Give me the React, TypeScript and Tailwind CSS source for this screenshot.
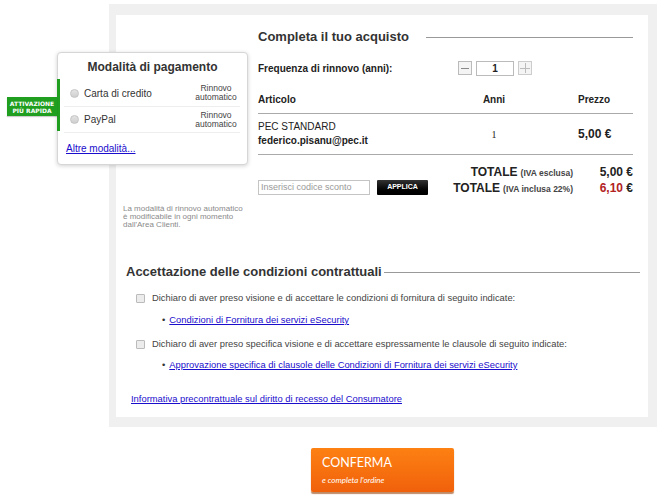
import React from "react";

const ff = "font-['Liberation_Sans',Arial,sans-serif]";

function PaymentCard() {
    return (
        <div className="absolute left-[57px] top-[52px] w-[191px] h-[113px] bg-white border border-[#d6d6d6] rounded-[4px] shadow-[0_1px_4px_rgba(0,0,0,0.18)]">
            <div className="text-center text-[12px] font-bold text-[#333] mt-[7px] leading-[15px]">Modalità di pagamento</div>
            {/* green accent */}
            <div className="absolute -left-px top-[26px] w-[3px] h-[52px] bg-[#1f9e1f]" />
            <div className="mt-[5px] ml-[6px] mr-[7px]">
                <div className="flex items-center h-[27px] border-b border-[#eeeeee]">
                    <span className="w-[9px] h-[9px] rounded-full bg-gradient-to-b from-[#e4e4e4] to-[#cfcfcf] border border-[#c4c4c4] ml-[6px]" />
                    <span className="ml-[5px] text-[10px] text-[#333]">Carta di credito</span>
                    <span className="ml-auto w-[48px] text-center text-[8.5px] leading-[9px] text-[#444]">Rinnovo<br />automatico</span>
                </div>
                <div className="flex items-center h-[26px] border-b border-[#eeeeee]">
                    <span className="w-[9px] h-[9px] rounded-full bg-gradient-to-b from-[#e4e4e4] to-[#cfcfcf] border border-[#c4c4c4] ml-[6px]" />
                    <span className="ml-[5px] text-[10px] text-[#333]">PayPal</span>
                    <span className="ml-auto w-[48px] text-center text-[8.5px] leading-[9px] text-[#444]">Rinnovo<br />automatico</span>
                </div>
                <a href="#" className="block mt-[8px] ml-[2px] text-[10px] text-[#1a0dcc] underline">Altre modalità...</a>
            </div>
        </div>
    );
}

function Badge() {
    return (
        <div className="absolute left-[7px] top-[97px] w-[50px] h-[19px] bg-[#1f9e1f] flex flex-col items-center justify-center text-white font-bold text-[6px] leading-[7px] font-['DejaVu_Sans',sans-serif] shadow-[0_1px_1px_rgba(0,0,0,0.2)]">
            <span>ATTIVAZIONE</span>
            <span>PIÙ RAPIDA</span>
        </div>
    );
}

function Checkout() {
    return (
        <div className="w-[375px] pt-[12px] text-[#222]">
            <div className="flex items-center h-[20px]">
                <h2 className="text-[13px] font-bold text-[#333]">Completa il tuo acquisto</h2>
                <div className="flex-1 ml-[17px] border-t border-[#999]" />
            </div>
            <div className="flex items-center mt-[13px] h-[16px]">
                <span className="w-[200px] text-[10px] font-bold">Frequenza di rinnovo (anni):</span>
                <div className="flex items-center gap-[4px]">
                    <span className="w-[14px] h-[14px] border border-[#bbb] bg-[#f4f4f4] flex items-center justify-center">
                        <span className="w-[8px] h-px bg-[#888]" />
                    </span>
                    <span className="w-[38px] h-[15px] border border-[#bbb] bg-white flex items-center justify-center text-[10px] font-bold">1</span>
                    <span className="w-[14px] h-[14px] border border-[#ccc] bg-[#f4f4f4] relative flex items-center justify-center">
                        <span className="absolute w-[10px] h-px bg-[#bbb]" />
                        <span className="absolute h-[10px] w-px bg-[#bbb]" />
                    </span>
                </div>
            </div>
            <div className="grid grid-cols-[200px_72px_103px] mt-[16px] text-[10px] font-bold pb-[6px] border-b border-[#aaa]">
                <span>Articolo</span>
                <span className="text-center">Anni</span>
                <span className="pl-[48px]">Prezzo</span>
            </div>
            <div className="grid grid-cols-[200px_72px_103px] items-center h-[41px] border-b border-[#aaa]">
                <div className="text-[10px] leading-[14px]">
                    <div>PEC STANDARD</div>
                    <div className="font-bold">federico.pisanu@pec.it</div>
                </div>
                <span className="text-center text-[10px] font-['Liberation_Serif',serif]">1</span>
                <span className="pl-[48px] text-[12px] font-bold">5,00 €</span>
            </div>
            <div className="flex mt-[9px]">
                <div className="flex items-center self-end gap-[7px] mb-[1px]">
                    <span className="w-[112px] h-[15px] border border-[#c4c4c4] text-[9px] text-[#999] pl-[2px] leading-[13px]">Inserisci codice sconto</span>
                    <span className="w-[51px] h-[15px] bg-gradient-to-b from-[#333] to-[#000] text-white text-[7px] font-bold flex items-center justify-center rounded-[1px]">APPLICA</span>
                </div>
                <div className="ml-auto flex flex-col">
                    <div className="flex items-baseline justify-end h-[16px] leading-[16px]">
                        <span className="text-[12px] font-bold">TOTALE</span>
                        <span className="text-[8.5px] font-bold text-[#444] ml-[3px]">(IVA esclusa)</span>
                        <span className="w-[60px] text-right text-[12px] font-bold">5,00 €</span>
                    </div>
                    <div className="flex items-baseline justify-end h-[16px] leading-[16px]">
                        <span className="text-[12px] font-bold">TOTALE</span>
                        <span className="text-[8.5px] font-bold text-[#444] ml-[3px]">(IVA inclusa 22%)</span>
                        <span className="w-[60px] text-right text-[12px] font-bold"><span className="text-[#b22222]">6,10</span> €</span>
                    </div>
                </div>
            </div>
        </div>
    );
}

function Conditions() {
    return (
        <div className="pl-[10px] pr-[8px] mt-[34px]">
            <div className="flex items-center h-[18px]">
                <h2 className="text-[13px] font-bold text-[#333]">Accettazione delle condizioni contrattuali</h2>
                <div className="flex-1 border-t border-[#999] ml-[2px]" />
            </div>
            <div className="text-[9.4px] text-[#444] pl-[10px]">
                <div className="flex items-center mt-[10px] h-[14px]">
                    <span className="w-[9px] h-[9px] border border-[#bbb] bg-[#ececec] rounded-[1px]" />
                    <span className="ml-[7px]">Dichiaro di aver preso visione e di accettare le condizioni di fornitura di seguito indicate:</span>
                </div>
                <div className="flex items-center ml-[26px] mt-[8px] h-[14px]">
                    <span className="text-[#333]">•</span>
                    <a href="#" className="ml-[4px] text-[#1a0dcc] underline">Condizioni di Fornitura dei servizi eSecurity</a>
                </div>
                <div className="flex items-center mt-[10px] h-[14px]">
                    <span className="w-[9px] h-[9px] border border-[#bbb] bg-[#ececec] rounded-[1px]" />
                    <span className="ml-[7px]">Dichiaro di aver preso specifica visione e di accettare espressamente le clausole di seguito indicate:</span>
                </div>
                <div className="flex items-center ml-[26px] mt-[7px] h-[14px]">
                    <span className="text-[#333]">•</span>
                    <a href="#" className="ml-[4px] text-[#1a0dcc] underline">Approvazione specifica di clausole delle Condizioni di Fornitura dei servizi eSecurity</a>
                </div>
            </div>
            <a href="#" className="block mt-[20px] ml-[5px] text-[9.4px] text-[#1a0dcc] underline">Informativa precontrattuale sul diritto di recesso del Consumatore</a>
        </div>
    );
}

export default function App() {
    return (
        <div className={`relative w-[662px] h-[500px] bg-white overflow-hidden ${ff}`}>
            <div className="ml-[109px] mt-[4px] w-[548px] h-[423px] bg-[#f0f0f0] pt-[11px] pl-[7px] pr-[9px] pb-[10px]">
                <div className="bg-white h-full">
                    <div className="flex">
                        <div className="w-[142px] pl-[7px] pt-[190px] text-[8px] leading-[8px] text-[#8a8a8a]">
                            La modalità di rinnovo automatico<br />è modificabile in ogni momento<br />dall'Area Clienti.
                        </div>
                        <Checkout />
                    </div>
                    <Conditions />
                </div>
            </div>
            <button className="block ml-[311px] mt-[21px] w-[143px] h-[44px] rounded-[2px] bg-gradient-to-b from-[#fd8113] to-[#f0600b] shadow-[0_2px_1px_rgba(150,60,0,0.6)] text-left pl-[11px] text-white font-['Lato',sans-serif]">
                <div className="text-[12.5px] leading-[15px]">CONFERMA</div>
                <div className="text-[8px] italic mt-[4px]">e completa l'ordine</div>
            </button>
            <PaymentCard />
            <Badge />
        </div>
    );
}
